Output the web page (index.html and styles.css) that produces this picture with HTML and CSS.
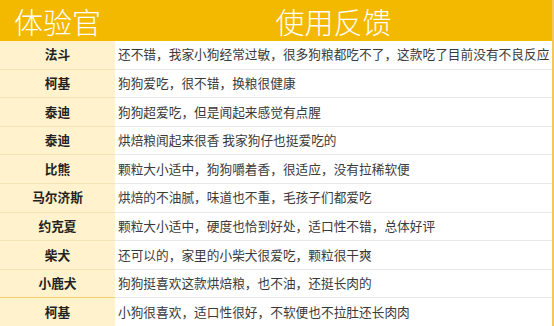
FILE: index.html
```html
<!DOCTYPE html>
<html lang="zh">
<head>
    <meta charset="UTF-8">
    <title>体验官 使用反馈</title>
    <link rel="stylesheet" href="styles.css">
</head>
<body>
    <table class="feedback">
        <thead>
            <tr>
                <th class="col-name">体验官</th>
                <th class="col-text">使用反馈</th>
            </tr>
        </thead>
        <tbody>
            <tr><td class="name">法斗</td><td class="text">还不错，我家小狗经常过敏，很多狗粮都吃不了，这款吃了目前没有不良反应</td></tr>
            <tr><td class="name">柯基</td><td class="text">狗狗爱吃，很不错，换粮很健康</td></tr>
            <tr><td class="name">泰迪</td><td class="text">狗狗超爱吃，但是闻起来感觉有点腥</td></tr>
            <tr><td class="name">泰迪</td><td class="text">烘焙粮闻起来很香 我家狗仔也挺爱吃的</td></tr>
            <tr><td class="name">比熊</td><td class="text">颗粒大小适中，狗狗嚼着香，很适应，没有拉稀软便</td></tr>
            <tr><td class="name">马尔济斯</td><td class="text">烘焙的不油腻，味道也不重，毛孩子们都爱吃</td></tr>
            <tr><td class="name">约克夏</td><td class="text">颗粒大小适中，硬度也恰到好处，适口性不错，总体好评</td></tr>
            <tr><td class="name">柴犬</td><td class="text">还可以的，家里的小柴犬很爱吃，颗粒很干爽</td></tr>
            <tr><td class="name">小鹿犬</td><td class="text">狗狗挺喜欢这款烘焙粮，也不油，还挺长肉的</td></tr>
            <tr class="last"><td class="name">柯基</td><td class="text">小狗很喜欢，适口性很好，不软便也不拉肚还长肉肉</td></tr>
        </tbody>
    </table>
</body>
</html>
```

FILE: styles.css
```css
body {
    margin: 0;
    padding: 0;
    background: #fff;
    font-family: "Noto Sans CJK SC", sans-serif;
}
.feedback {
    width: 554px;
    border-collapse: collapse;
    table-layout: fixed;
    border-right: 2px solid #f3c85a;
    border-bottom: 2px solid #f3c85a;
}
.feedback thead th {
    background: #f2b900;
    color: #fff;
    font-weight: 300;
    font-size: 29px;
    height: 39px;
    padding: 2px 0 0;
    line-height: 37px;
    text-align: center;
    white-space: nowrap;
}
.col-name {
    width: 115px;
}
.feedback td {
    height: 27.6px;
    padding: 0;
    font-size: 12.7px;
    line-height: 1;
    white-space: nowrap;
    overflow: hidden;
}
.feedback tbody tr + tr td {
    border-top: 1px solid #e8e8e8;
}
.feedback tbody tr + tr td.name {
    border-top: 1px solid #f4e4b4;
}
.feedback tbody tr.last td.name {
    border-top: 1px solid #f3cf6e;
}
.name {
    background: #fff2cc;
    color: #222;
    font-weight: bold;
    text-align: center;
}
.text {
    color: #3a3a3a;
    padding-left: 3px !important;
}
```
